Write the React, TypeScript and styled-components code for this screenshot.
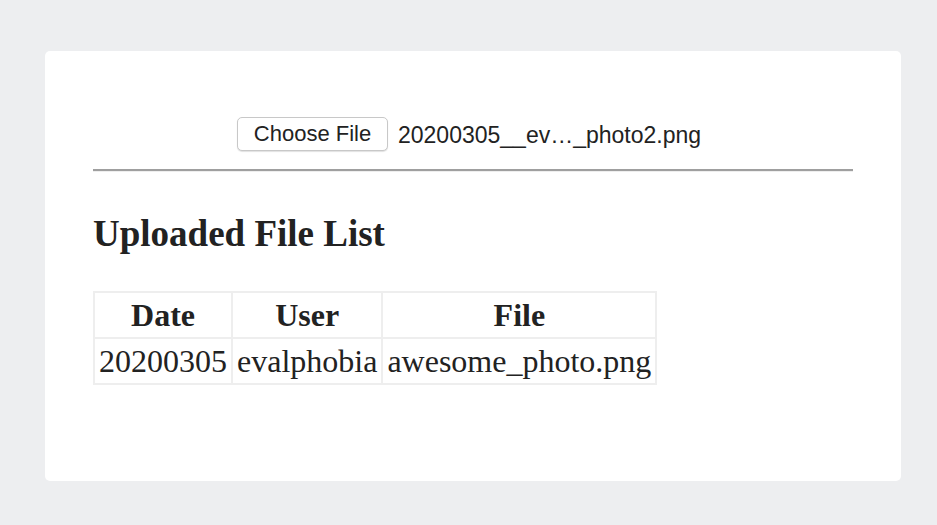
import styled, { createGlobalStyle } from 'styled-components'

const GlobalStyle = createGlobalStyle`
  html, body {
    margin: 0;
    padding: 0;
    background-color: #edeef0;
  }
  body {
    font-family: "Liberation Serif", "Times New Roman", serif;
    color: #222222;
  }
`

const Page = styled.div`
  padding: 51px 36px 44px 45px;
`

const Card = styled.div`
  width: 856px;
  box-sizing: border-box;
  padding: 66px 48px 96px 48px;
  background-color: #ffffff;
  border-radius: 5px;
`

const FileRow = styled.div`
  display: flex;
  justify-content: center;
  align-items: center;
  margin-bottom: 18px;
`

const FilePicker = styled.div`
  display: flex;
  align-items: center;
  width: 472px;
  font-family: "Liberation Sans", Arial, sans-serif;
  font-size: 23px;
  color: #222222;
`

const ChooseButton = styled.button`
  height: 34px;
  width: 151px;
  padding: 0;
  margin: 0 10px 0 0;
  box-sizing: border-box;
  font-family: inherit;
  font-size: 22px;
  color: #222222;
  background-color: #ffffff;
  border: 1px solid #c8c8c8;
  border-radius: 5px;
  box-shadow: 0 1px 1px rgba(0, 0, 0, 0.12);
`

const FileName = styled.span`
  white-space: nowrap;
  padding-top: 2px;
`

const Divider = styled.hr`
  margin: 0;
  height: 0;
  border: none;
  border-top: 2px solid #9f9f9f;
  border-bottom: 1px solid #eeeeee;
`

const Heading = styled.h2`
  margin: 40px 0 36px 0;
  font-size: 37px;
  font-weight: bold;
`

const Table = styled.table`
  border-collapse: collapse;
  font-size: 32px;
`

const HeadCell = styled.th`
  padding: 4px 5px 3px 5px;
  border: 2px solid #eeeeee;
  font-weight: bold;
  text-align: center;
`

const Cell = styled.td`
  padding: 4px 4px 3px 4px;
  border: 2px solid #eeeeee;
  text-align: left;
`

const uploads = [
  { date: '20200305', user: 'evalphobia', file: 'awesome_photo.png' },
]

const App = () => {
  return (
    <>
      <GlobalStyle />
      <Page>
        <Card>
          <FileRow>
            <FilePicker>
              <ChooseButton type="button">Choose File</ChooseButton>
              <FileName>20200305__ev…_photo2.png</FileName>
            </FilePicker>
          </FileRow>
          <Divider />
          <Heading>Uploaded File List</Heading>
          <Table>
            <thead>
              <tr>
                <HeadCell>Date</HeadCell>
                <HeadCell>User</HeadCell>
                <HeadCell>File</HeadCell>
              </tr>
            </thead>
            <tbody>
              {uploads.map((u) => (
                <tr key={u.file}>
                  <Cell>{u.date}</Cell>
                  <Cell>{u.user}</Cell>
                  <Cell>{u.file}</Cell>
                </tr>
              ))}
            </tbody>
          </Table>
        </Card>
      </Page>
    </>
  )
}

export default App
